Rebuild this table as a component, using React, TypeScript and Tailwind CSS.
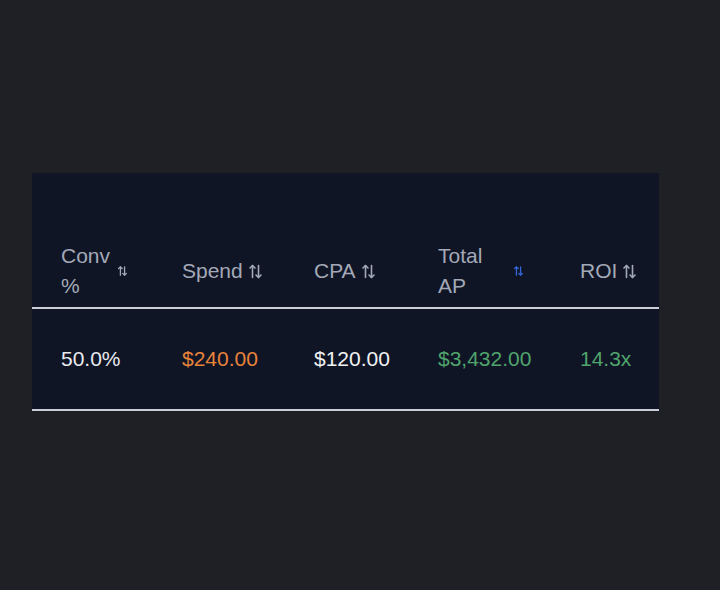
import React from 'react'

function SortIcon({ small = false, active = false }: { small?: boolean; active?: boolean }) {
  const w = small ? 9 : 13
  const h = small ? 12 : 15
  return (
    <svg
      width={w}
      height={h}
      viewBox="0 0 13 15"
      fill="none"
      stroke="currentColor"
      strokeWidth={small ? 1.9 : 1.6}
      strokeLinecap="round"
      strokeLinejoin="round"
      className={`shrink-0 ${active ? 'text-[#3365d6]' : 'text-[#a3a9b7]'}`}
    >
      {/* up arrow */}
      <path d="M3.5 13.5V1.5" />
      <path d="M1 4l2.5-2.5L6 4" />
      {/* down arrow */}
      <path d="M9.5 1.5v12" />
      <path d="M7 11l2.5 2.5L12 11" />
    </svg>
  )
}

const rows = [
  { conv: '50.0%', spend: '$240.00', cpa: '$120.00', total: '$3,432.00', roi: '14.3x' },
]

export default function App() {
  return (
    <div className="w-[720px] h-[590px] bg-[#1e2025] pt-[173px] pl-[32px]" style={{ fontFamily: '"Liberation Sans", Arial, sans-serif' }}>
      <div className="w-[627px] bg-[#101526] pt-[53px]">
        <table className="w-full table-fixed border-collapse text-[21px]">
          <colgroup>
            <col className="w-[121px]" />
            <col className="w-[133px]" />
            <col className="w-[124px]" />
            <col className="w-[141px]" />
            <col className="w-[108px]" />
          </colgroup>
          <thead>
            <tr className="border-b-2 border-[#c9ced8] text-[#a3a9b7]">
              <th className="pl-[29px] pr-[26px] pt-[15px] pb-[6px] font-normal text-left">
                <div className="flex items-center justify-between leading-[30px]">
                  <span>Conv<br />%</span>
                  <SortIcon small />
                </div>
              </th>
              <th className="pl-[29px] pt-[15px] pb-[6px] font-normal text-left">
                <div className="flex items-center gap-[6px] leading-[30px]">
                  <span>Spend</span>
                  <SortIcon />
                </div>
              </th>
              <th className="pl-[28px] pt-[15px] pb-[6px] font-normal text-left">
                <div className="flex items-center gap-[6px] leading-[30px]">
                  <span>CPA</span>
                  <SortIcon />
                </div>
              </th>
              <th className="pl-[28px] pr-[28px] pt-[15px] pb-[6px] font-normal text-left">
                <div className="flex items-center justify-between leading-[30px]">
                  <span>Total<br />AP</span>
                  <SortIcon small active />
                </div>
              </th>
              <th className="pl-[29px] pt-[15px] pb-[6px] font-normal text-left">
                <div className="flex items-center gap-[6px] leading-[30px]">
                  <span>ROI</span>
                  <SortIcon />
                </div>
              </th>
            </tr>
          </thead>
          <tbody>
            {rows.map((r, i) => (
              <tr key={i} className="border-b-2 border-[#c9ced8] leading-[26px]">
                <td className="pl-[29px] py-[37px] text-[#e8eaee]">{r.conv}</td>
                <td className="pl-[29px] py-[37px] text-[#e8833a]">{r.spend}</td>
                <td className="pl-[28px] py-[37px] text-[#f1f2f4]">{r.cpa}</td>
                <td className="pl-[28px] py-[37px] text-[#4fa46c]">{r.total}</td>
                <td className="pl-[29px] py-[37px] text-[#4fa46c]">{r.roi}</td>
              </tr>
            ))}
          </tbody>
        </table>
      </div>
    </div>
  )
}
